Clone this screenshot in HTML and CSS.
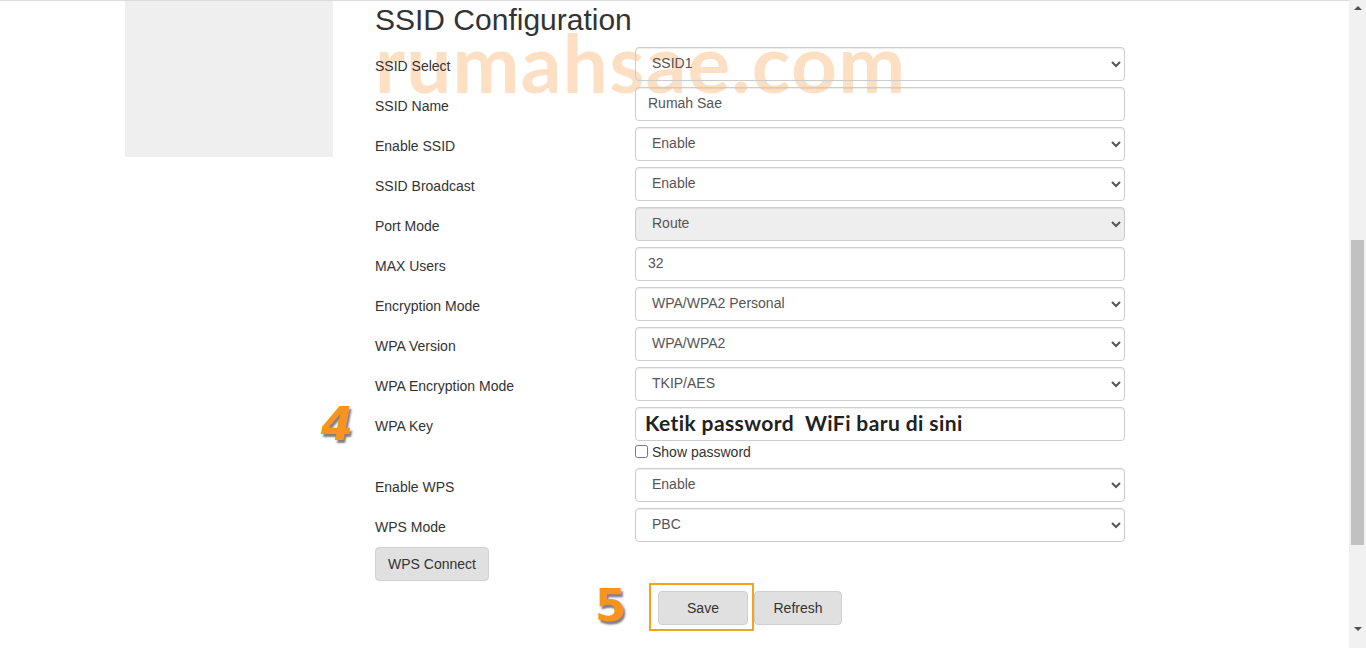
FILE: index.html
```html
<!DOCTYPE html>
<html>
<head>
<meta charset="utf-8">
<title>SSID Configuration</title>
<link rel="stylesheet" href="styles.css">
</head>
<body>
<div class="viewport">
  <div class="page">
    <div class="layout">
      <aside class="sidebar"></aside>
      <main class="main">
        <div class="watermark">rumahsae.com</div>
        <h2 class="title">SSID Configuration</h2>
        <div class="form">
          <div class="row">
            <label class="lbl">SSID Select</label>
            <select class="ctl"><option>SSID1</option></select>
          </div>
          <div class="row">
            <label class="lbl">SSID Name</label>
            <input class="ctl" type="text" value="Rumah Sae">
          </div>
          <div class="row">
            <label class="lbl">Enable SSID</label>
            <select class="ctl"><option>Enable</option></select>
          </div>
          <div class="row">
            <label class="lbl">SSID Broadcast</label>
            <select class="ctl"><option>Enable</option></select>
          </div>
          <div class="row">
            <label class="lbl">Port Mode</label>
            <select class="ctl ctl-off"><option>Route</option></select>
          </div>
          <div class="row">
            <label class="lbl">MAX Users</label>
            <input class="ctl" type="text" value="32">
          </div>
          <div class="row">
            <label class="lbl">Encryption Mode</label>
            <select class="ctl"><option>WPA/WPA2 Personal</option></select>
          </div>
          <div class="row">
            <label class="lbl">WPA Version</label>
            <select class="ctl"><option>WPA/WPA2</option></select>
          </div>
          <div class="row">
            <label class="lbl">WPA Encryption Mode</label>
            <select class="ctl"><option>TKIP/AES</option></select>
          </div>
          <div class="row row-key">
            <span class="step step-4">4</span>
            <label class="lbl">WPA Key</label>
            <div class="key-col">
              <div class="ctl key-box"><span class="key-hint">Ketik password&nbsp; WiFi baru di sini</span></div>
              <label class="show"><input type="checkbox" class="chk">Show password</label>
            </div>
          </div>
          <div class="row">
            <label class="lbl">Enable WPS</label>
            <select class="ctl"><option>Enable</option></select>
          </div>
          <div class="row">
            <label class="lbl">WPS Mode</label>
            <select class="ctl"><option>PBC</option></select>
          </div>
        </div>
        <button class="btn btn-wps">WPS Connect</button>
        <div class="actions">
          <div class="save-wrap">
            <span class="step step-5">5</span>
            <span class="highlight"></span>
            <button class="btn btn-save">Save</button>
          </div>
          <button class="btn btn-refresh">Refresh</button>
        </div>
      </main>
    </div>
  </div>
  <div class="scrollbar">
    <span class="arrow arrow-up"></span>
    <span class="thumb"></span>
    <span class="arrow arrow-down"></span>
  </div>
</div>
</body>
</html>
```
FILE: styles.css
```css
* { box-sizing: border-box; }
html, body { margin: 0; padding: 0; background: #fff; }
body {
  font-family: "Liberation Sans", Arial, sans-serif;
  font-size: 14px;
  color: #333;
  overflow: hidden;
}
.viewport {
  display: flex;
  height: 648px;
  width: 1366px;
}
.page {
  flex: 1;
  border-top: 1px solid #dcdcdc;
}
.layout {
  display: flex;
  align-items: flex-start;
  padding-left: 125px;
}
.sidebar {
  width: 208px;
  height: 156px;
  background: #efefef;
}
.main {
  position: relative;
  width: 750px;
  margin-left: 42px;
}
.watermark {
  position: absolute;
  left: 0;
  top: 21px;
  font-family: Lato, "Open Sans", sans-serif;
  font-weight: 700;
  font-size: 80px;
  line-height: 1;
  letter-spacing: 1.3px;
  color: rgba(247, 140, 40, 0.28);
  pointer-events: none;
  white-space: nowrap;
  z-index: 0;
}
.title {
  margin: 0 0 10px 0;
  padding-top: 2px;
  font-size: 30px;
  font-weight: 400;
  line-height: 34px;
  color: #333;
  position: relative;
}
.form {
  display: flex;
  flex-direction: column;
  gap: 6px;
}
.row {
  display: flex;
  align-items: flex-start;
  position: relative;
}
.lbl {
  width: 260px;
  flex: none;
  padding-top: 9px;
  line-height: 20px;
  font-weight: 400;
  color: #333;
  position: relative;
}
.ctl {
  display: block;
  width: 490px;
  height: 34px;
  padding: 5px 12px 7px;
  font-family: "Liberation Sans", Arial, sans-serif;
  font-size: 14px;
  line-height: 20px;
  color: #555;
  background-color: transparent;
  border: 1px solid #ccc;
  border-radius: 4px;
  box-shadow: inset 0 1px 1px rgba(0,0,0,.075);
  margin: 0;
}
.ctl-off { background-color: #eee !important; }
.key-col {
  display: flex;
  flex-direction: column;
}
.key-box {
  display: flex;
  align-items: center;
  padding: 0 9px 3px;
}
.key-hint {
  font-family: Lato, "Open Sans", sans-serif;
  font-weight: 700;
  font-size: 21px;
  letter-spacing: 0.4px;
  color: #222;
  white-space: nowrap;
}
.show {
  display: flex;
  align-items: center;
  height: 21px;
  color: #333;
  font-size: 14px;
}
.chk {
  width: 13px;
  height: 13px;
  margin: 0 4px 0 0;
}
.step {
  position: absolute;
  font-family: "DejaVu Sans", "Liberation Sans", sans-serif;
  font-weight: 700;
  line-height: 1;
  color: #f7931e;
  text-shadow: 2px 3px 2px rgba(0,0,0,0.5);
}
.step-4 {
  font-size: 46px;
  font-style: italic;
  left: -54px;
  top: -6px;
}
.step-5 {
  font-size: 45px;
  left: -63px;
  top: -8px;
}
.btn {
  height: 34px;
  padding: 0 12px;
  font-family: "Liberation Sans", Arial, sans-serif;
  font-size: 14px;
  color: #333;
  background: #e0e0e0;
  border: 1px solid #d0d0d0;
  border-radius: 4px;
}
.btn-wps {
  display: block;
  width: 114px;
  margin-top: 5px;
}
.actions {
  display: flex;
  justify-content: center;
  gap: 6px;
  margin-top: 10px;
}
.save-wrap { position: relative; }
.highlight {
  position: absolute;
  left: -9px;
  top: -8px;
  width: 105px;
  height: 48px;
  border: 2px solid #f7a21b;
}
.btn-save { width: 90px; position: relative; }
.btn-refresh { width: 88px; }
.scrollbar {
  width: 17px;
  flex: none;
  background: #f1f1f1;
  position: relative;
  display: flex;
  flex-direction: column;
  align-items: center;
}
.arrow {
  width: 0;
  height: 0;
  border-left: 4px solid transparent;
  border-right: 4px solid transparent;
}
.arrow-up {
  margin-top: 6px;
  border-bottom: 4px solid #505050;
}
.arrow-down {
  margin-top: auto;
  margin-bottom: 17px;
  border-top: 4px solid #505050;
}
.thumb {
  width: 13px;
  height: 305px;
  margin-top: 230px;
  background: #c1c1c1;
}
```
